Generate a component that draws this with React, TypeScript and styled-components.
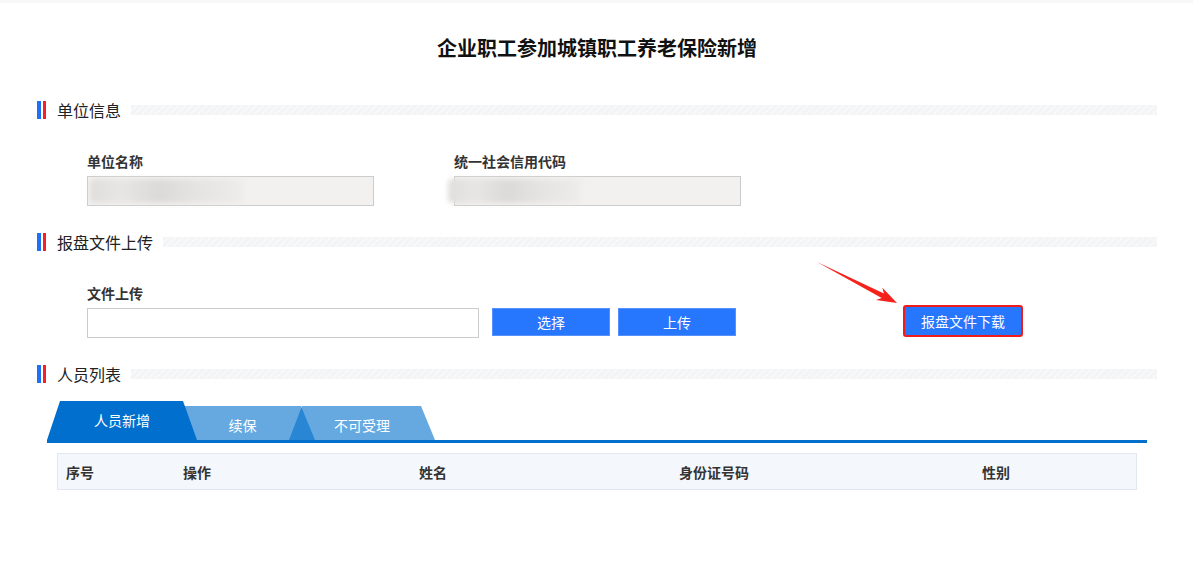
import React from "react";
import styled, { createGlobalStyle } from "styled-components";

const GlobalStyle = createGlobalStyle`
  html, body { margin: 0; padding: 0; background: #ffffff; }
  body { font-family: "Noto Sans CJK SC", "Noto Sans", sans-serif; color: #333; }
  * { box-sizing: border-box; }
`;

const Page = styled.div`
  position: relative;
  width: 1193px;
  height: 579px;
  overflow: hidden;
  background: #fff;
`;

const TopStrip = styled.div`
  height: 3px;
  background: #f8f8f8;
`;

const Content = styled.div`
  padding: 0 36px 0 37px;
`;

const Title = styled.h1`
  margin: 33px 0 0;
  height: 24px;
  line-height: 24px;
  font-size: 20px;
  font-weight: 700;
  color: #111;
  text-align: center;
`;

const SectionHeader = styled.div<{ $top: number }>`
  display: flex;
  align-items: center;
  height: 18px;
  margin-top: ${(p) => p.$top}px;
`;

const BlueBar = styled.span`
  width: 4px;
  height: 18px;
  background: #1f6ff7;
`;

const RedBar = styled.span`
  width: 3px;
  height: 18px;
  margin-left: 2px;
  background: #f5202a;
`;

const SectionTitle = styled.span`
  margin-left: 11px;
  font-size: 16px;
  line-height: 18px;
  color: #222;
  white-space: nowrap;
`;

const Stripe = styled.span`
  flex: 1;
  height: 10px;
  margin-left: 10px;
  background: repeating-linear-gradient(
    135deg,
    #f3f4f6 0px,
    #f3f4f6 3px,
    #f8f8f9 3px,
    #f8f8f9 5px
  );
`;

const FieldRow = styled.div`
  display: flex;
  gap: 80px;
  margin-top: 33px;
  padding-left: 50px;
`;

const Field = styled.div`
  display: flex;
  flex-direction: column;
  width: 287px;
`;

const Label = styled.label`
  display: block;
  height: 18px;
  line-height: 18px;
  font-size: 14px;
  font-weight: 700;
  color: #333;
`;

const ReadonlyBox = styled.div`
  margin-top: 6px;
  height: 30px;
  width: 287px;
  border: 1px solid #cccccc;
  background: #f3f1ef;
  display: flex;
  align-items: center;
`;

const Blur = styled.span<{ $w: number; $shift: number }>`
  display: block;
  width: ${(p) => p.$w}px;
  height: 24px;
  margin-left: ${(p) => p.$shift}px;
  background:
    linear-gradient(90deg, #e0dedd 0%, #e8e6e5 20%, #dcdad9 45%, #e6e4e3 70%, #eeeceb 100%);
  filter: blur(2.5px);
  border-radius: 4px;
`;

const UploadBlock = styled.div`
  margin-top: 33px;
  padding-left: 50px;
`;

const UploadRow = styled.div`
  display: flex;
  align-items: flex-start;
  margin-top: 6px;
`;

const FileInput = styled.div`
  width: 392px;
  height: 30px;
  border: 1px solid #cccccc;
  background: #fff;
`;

const BlueButton = styled.button<{ $ml: number }>`
  width: 118px;
  height: 28px;
  margin-left: ${(p) => p.$ml}px;
  border: 1px solid #5591ff;
  background: #2676fe;
  color: #fff;
  font-family: inherit;
  font-size: 14px;
  padding: 0;
  cursor: pointer;
`;

const DownloadButton = styled.button`
  width: 120px;
  height: 32px;
  margin-left: 167px;
  margin-top: -3px;
  border: 2px solid #f01c1c;
  border-radius: 3px;
  background: #2676fe;
  color: #fff;
  font-family: inherit;
  font-size: 14px;
  padding: 0;
  cursor: pointer;
`;

const TabBar = styled.div`
  display: flex;
  align-items: flex-end;
  margin: 18px 0 0 10px;
  width: 1100px;
  height: 42px;
  border-bottom: 3px solid #0070cc;
`;

const Tab = styled.div<{ $active?: boolean; $w: number; $ml: number }>`
  position: relative;
  z-index: ${(p) => (p.$active ? 2 : 1)};
  width: ${(p) => p.$w}px;
  height: ${(p) => (p.$active ? 39 : 34)}px;
  margin-left: ${(p) => p.$ml}px;
  background: ${(p) => (p.$active ? "#006fcd" : "rgba(0, 111, 205, 0.6)")};
  clip-path: polygon(13px 0, calc(100% - 14px) 0, 100% 100%, 0 100%);
  color: #fff;
  font-size: 14px;
  display: flex;
  align-items: center;
  justify-content: center;
  padding-top: ${(p) => (p.$active ? 0 : 4)}px;
  padding-bottom: ${(p) => (p.$active ? 1 : 0)}px;
`;

const TableHead = styled.div`
  margin: 10px 0 0 20px;
  width: 1080px;
  height: 37px;
  border: 1px solid #e1e8f1;
  background: #f4f8fd;
  display: grid;
  grid-template-columns: 117px 236px 260px 303px 1fr;
  align-items: center;
  padding-left: 8px;
`;

const HeadCell = styled.div`
  font-size: 14px;
  font-weight: 700;
  color: #333;
`;

const ArrowLayer = styled.svg`
  position: absolute;
  left: 0;
  top: 0;
  pointer-events: none;
`;

export default function App() {
  return (
    <>
      <GlobalStyle />
      <Page>
        <TopStrip />
        <Content>
          <Title>企业职工参加城镇职工养老保险新增</Title>

          <SectionHeader $top={41}>
            <BlueBar />
            <RedBar />
            <SectionTitle>单位信息</SectionTitle>
            <Stripe />
          </SectionHeader>

          <FieldRow>
            <Field>
              <Label>单位名称</Label>
              <ReadonlyBox>
                <Blur $w={153} $shift={2} />
              </ReadonlyBox>
            </Field>
            <Field>
              <Label>统一社会信用代码</Label>
              <ReadonlyBox>
                <Blur $w={133} $shift={-7} />
              </ReadonlyBox>
            </Field>
          </FieldRow>

          <SectionHeader $top={27}>
            <BlueBar />
            <RedBar />
            <SectionTitle>报盘文件上传</SectionTitle>
            <Stripe />
          </SectionHeader>

          <UploadBlock>
            <Label>文件上传</Label>
            <UploadRow>
              <FileInput />
              <BlueButton $ml={13}>选择</BlueButton>
              <BlueButton $ml={8}>上传</BlueButton>
              <DownloadButton>报盘文件下载</DownloadButton>
            </UploadRow>
          </UploadBlock>

          <SectionHeader $top={27}>
            <BlueBar />
            <RedBar />
            <SectionTitle>人员列表</SectionTitle>
            <Stripe />
          </SectionHeader>

          <TabBar>
            <Tab $active $w={150} $ml={0}>人员新增</Tab>
            <Tab $w={145} $ml={-27}>续保</Tab>
            <Tab $w={146} $ml={-26}>不可受理</Tab>
          </TabBar>

          <TableHead>
            <HeadCell>序号</HeadCell>
            <HeadCell>操作</HeadCell>
            <HeadCell>姓名</HeadCell>
            <HeadCell>身份证号码</HeadCell>
            <HeadCell>性别</HeadCell>
          </TableHead>
        </Content>

        <ArrowLayer width="1193" height="579" viewBox="0 0 1193 579">
          <polygon
            points="817,262 883.9,293.5 882.4,287.7 897,303 876,300.1 881.7,297.9"
            fill="#f5221b"
          />
        </ArrowLayer>
      </Page>
    </>
  );
}
